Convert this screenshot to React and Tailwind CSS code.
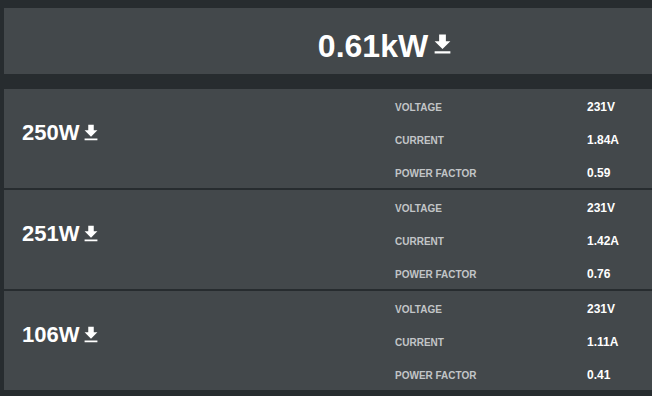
import React from 'react';

const circuits = [
  { power: '250W', voltage: '231V', current: '1.84A', pf: '0.59' },
  { power: '251W', voltage: '231V', current: '1.42A', pf: '0.76' },
  { power: '106W', voltage: '231V', current: '1.11A', pf: '0.41' },
];

function DownloadIcon({ className }) {
  return (
    <svg className={className} viewBox="0 0 24 24" fill="currentColor">
      <path d="M19 9h-4V3H9v6H5l7 7 7-7zM5 18v2h14v-2H5z" />
    </svg>
  );
}

function Row({ label, value }) {
  return (
    <div className="flex h-[33px] shrink-0 items-center">
      <span className="w-[192px] pt-[1px] text-[10px] font-bold uppercase text-[#c2c5c7]">{label}</span>
      <span className="text-[12px] font-bold text-white">{value}</span>
    </div>
  );
}

export default function App() {
  return (
    <div
      className="h-[396px] w-[652px] overflow-hidden bg-[#272c2f] pl-[4px] pt-[8px]"
      style={{ fontFamily: '"Liberation Sans", Arial, sans-serif' }}
    >
      {/* total */}
      <div className="mb-[15px] flex h-[66px] items-center justify-center bg-[#43484b] pl-[118px] pt-[9px]">
        <span className="text-[32px] font-bold leading-none text-white">0.61kW</span>
        <DownloadIcon className="mb-[3px] ml-[1px] h-[27px] w-[27px] text-white" />
      </div>

      {/* circuits */}
      <div className="flex flex-col gap-[2px]">
        {circuits.map((c, i) => (
          <div key={i} className="flex h-[99px] overflow-hidden bg-[#43484b]">
            <div className="flex w-[391px] items-center pb-[12px] pl-[18px]">
              <span className="text-[22px] font-bold leading-none text-white">{c.power}</span>
              <DownloadIcon className="ml-[1px] h-[22px] w-[22px] text-white" />
            </div>
            <div className="flex flex-1 flex-col pt-[1px]">
              <Row label="Voltage" value={c.voltage} />
              <Row label="Current" value={c.current} />
              <Row label="Power Factor" value={c.pf} />
            </div>
          </div>
        ))}
      </div>
    </div>
  );
}
